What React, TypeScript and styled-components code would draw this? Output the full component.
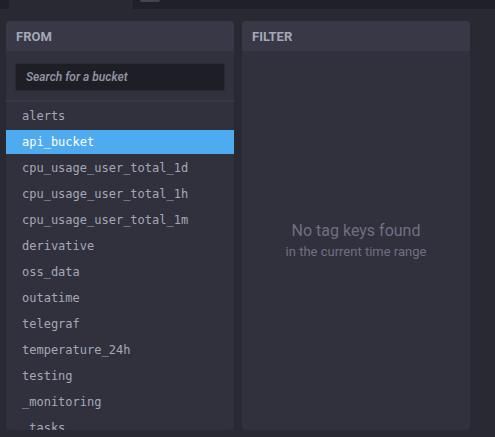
import styled, { createGlobalStyle } from 'styled-components';

const buckets = [
  'alerts',
  'api_bucket',
  'cpu_usage_user_total_1d',
  'cpu_usage_user_total_1h',
  'cpu_usage_user_total_1m',
  'derivative',
  'oss_data',
  'outatime',
  'telegraf',
  'temperature_24h',
  'testing',
  '_monitoring',
  '_tasks',
];

export default function App() {
  return (
    <>
      <GlobalStyle />
      <Page>
        <TopBar>
          <Tab />
          <TabButton />
        </TopBar>
        <Panels>
          <Panel>
            <PanelHeader>FROM</PanelHeader>
            <SearchSection>
              <SearchInput placeholder="Search for a bucket" />
            </SearchSection>
            <Divider />
            <BucketList>
              {buckets.map((name) => (
                <BucketItem key={name} $selected={name === 'api_bucket'}>
                  {name}
                </BucketItem>
              ))}
            </BucketList>
          </Panel>
          <Panel>
            <PanelHeader>FILTER</PanelHeader>
            <EmptyState>
              <EmptyTitle>No tag keys found</EmptyTitle>
              <EmptySub>in the current time range</EmptySub>
            </EmptyState>
          </Panel>
        </Panels>
      </Page>
    </>
  );
}

const GlobalStyle = createGlobalStyle`
  html, body {
    margin: 0;
    padding: 0;
    background: #292933;
    overflow: hidden;
  }
  * {
    box-sizing: border-box;
  }
`;

const Page = styled.div`
  width: 495px;
  height: 437px;
  background: #292933;
  font-family: Roboto, 'Noto Sans', sans-serif;
`;

const TopBar = styled.div`
  display: flex;
  height: 9px;
  padding-left: 9px;
  background: #202028;
`;

const Tab = styled.div`
  width: 124px;
  background: #292933;
`;

const TabButton = styled.div`
  width: 20px;
  height: 2px;
  margin-left: 7px;
  background: #434453;
  border-radius: 0 0 2px 2px;
`;

const Panels = styled.div`
  display: flex;
  gap: 8px;
  padding: 12px 0 0 6px;
`;

const Panel = styled.div`
  display: flex;
  flex-direction: column;
  width: 228px;
  height: 409px;
  background: #31313d;
  border-radius: 4px;
  overflow: hidden;
`;

const PanelHeader = styled.div`
  display: flex;
  align-items: center;
  flex: 0 0 30px;
  padding: 0 10px;
  background: #383846;
  color: #a4a8b6;
  font-size: 13px;
  font-weight: 700;
`;

const SearchSection = styled.div`
  flex-shrink: 0;
  padding: 12px 9px 9px;
`;

const SearchInput = styled.input`
  display: block;
  width: 100%;
  height: 28px;
  padding: 0 10px;
  background: #1e1e26;
  border: 1px solid #2a2a34;
  border-radius: 2px;
  color: #c6cad3;
  font-family: Roboto, sans-serif;
  font-size: 12px;
  font-style: italic;
  font-weight: 600;
  outline: none;

  &::placeholder {
    color: #8e91a1;
  }
`;

const Divider = styled.div`
  flex-shrink: 0;
  height: 2px;
  background: #383846;
`;

const BucketList = styled.div`
  flex: 1;
  min-height: 0;
  overflow: hidden;
  padding-top: 2px;
`;

const BucketItem = styled.div<{ $selected?: boolean }>`
  height: 24px;
  margin-bottom: 2px;
  padding-left: 16px;
  line-height: 24px;
  font-family: 'DejaVu Sans Mono', 'Liberation Mono', monospace;
  font-size: 12px;
  white-space: nowrap;
  color: ${(p) => (p.$selected ? '#ffffff' : '#a4a8b6')};
  background: ${(p) => (p.$selected ? '#4fabf0' : 'transparent')};
`;

const EmptyState = styled.div`
  flex: 1;
  display: flex;
  flex-direction: column;
  align-items: center;
  justify-content: center;
  text-align: center;
`;

const EmptyTitle = styled.div`
  color: #6e7080;
  font-size: 16px;
  line-height: 22px;
`;

const EmptySub = styled.div`
  color: #6e7080;
  font-size: 13px;
  line-height: 20px;
`;
